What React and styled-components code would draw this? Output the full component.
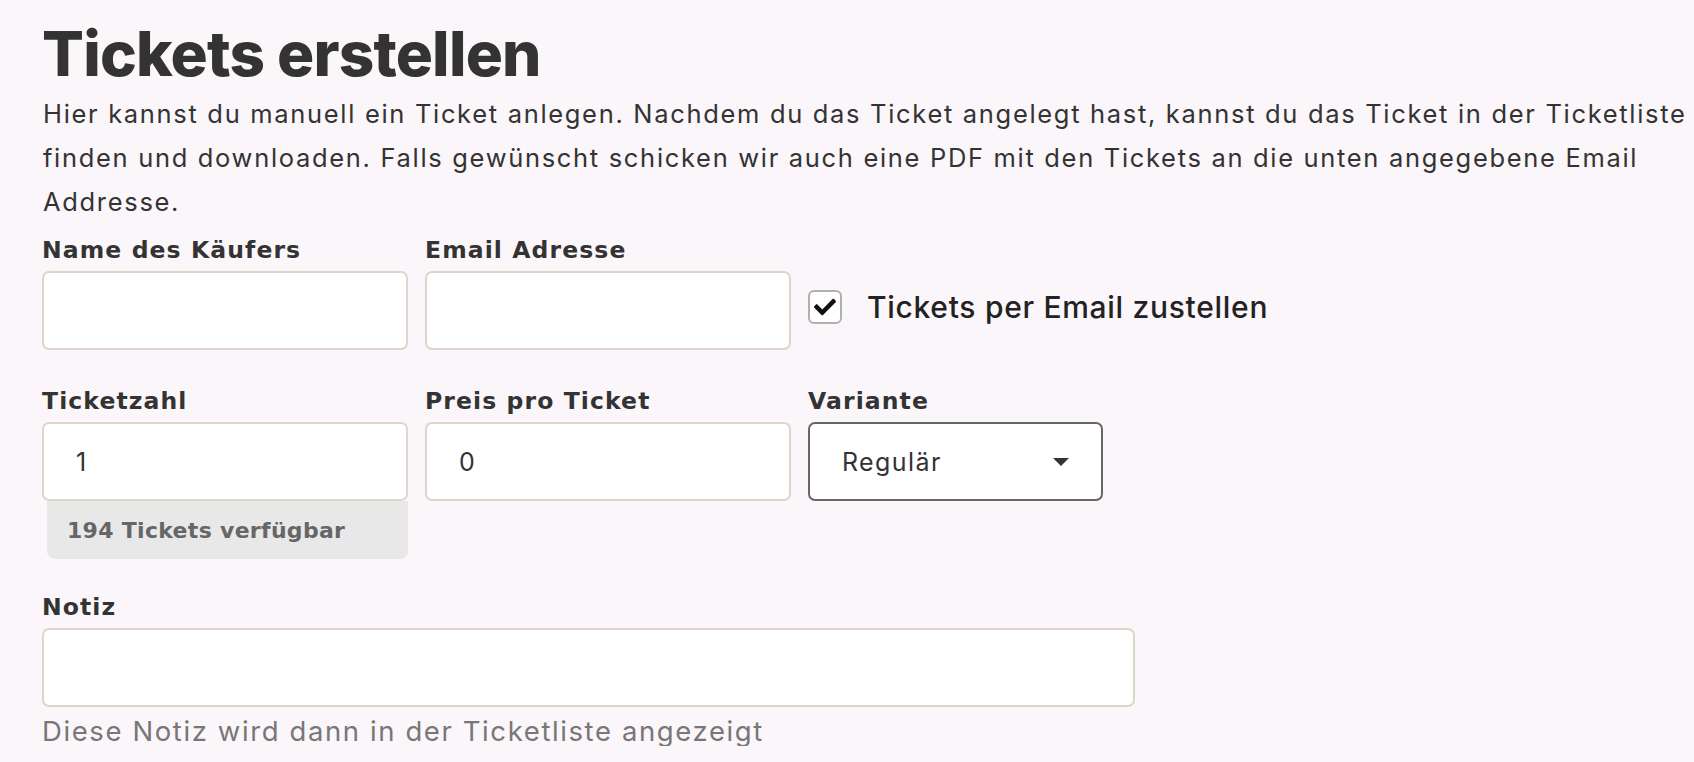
import React from "react";
import styled, { createGlobalStyle } from "styled-components";
import { FaCheck } from "react-icons/fa";

const Global = createGlobalStyle`
  html, body { margin: 0; padding: 0; background: #faf6fa; }
  body { font-family: Inter, "Noto Sans", sans-serif; color: #333; }
  * { box-sizing: border-box; }
`;

const Page = styled.main`
  padding: 23px 0 0 42px;
  width: 1694px;
`;

const Title = styled.h1`
  margin: 0;
  font-family: Inter, sans-serif;
  font-weight: 800;
  font-size: 62px;
  line-height: 62px;
  letter-spacing: -0.8px;
  color: #333;
`;

const Intro = styled.p`
  margin: 7px 0 0 1px;
  font-size: 25.5px;
  line-height: 44px;
  letter-spacing: 1.68px;
  color: #333;
  width: 1650px;
`;

const Row = styled.div`
  display: flex;
  gap: 17px;
  align-items: flex-start;
  margin-top: ${(p) => p.$top || 0}px;
`;

const Field = styled.div`
  display: flex;
  flex-direction: column;
  width: ${(p) => p.$w}px;
`;

const Label = styled.label`
  display: block;
  font-family: "DejaVu Sans", Inter, sans-serif;
  font-weight: 700;
  font-size: 23.5px;
  line-height: 30px;
  letter-spacing: 1.1px;
  color: #333;
  margin-bottom: 6px;
`;

const Input = styled.input`
  width: 100%;
  height: 79px;
  border: 2px solid #ddd6ca;
  border-radius: 7px;
  background: #fff;
  padding: 0 32px;
  font-family: Inter, sans-serif;
  font-size: 25px;
  letter-spacing: 1.2px;
  color: #333;
  outline: none;
`;

const SelectBox = styled.div`
  height: 79px;
  border: 2px solid #666;
  border-radius: 7px;
  background: #fff;
  display: flex;
  align-items: center;
  padding: 0 32px;
  font-size: 25px;
  letter-spacing: 1.4px;
  color: #333;
`;

const Caret = styled.span`
  margin-left: auto;
  width: 0;
  height: 0;
  border-left: 8px solid transparent;
  border-right: 8px solid transparent;
  border-top: 8px solid #333;
`;

const CheckGroup = styled.label`
  display: flex;
  align-items: center;
  height: 79px;
  padding-bottom: 8px;
  align-self: flex-end;
  gap: 25px;
  cursor: pointer;
`;

const CheckBox = styled.span`
  width: 34px;
  height: 34px;
  border: 2px solid #b0b0b0;
  border-radius: 6px;
  background: #fff;
  display: flex;
  align-items: center;
  justify-content: center;
  color: #111;
  font-size: 22px;
`;

const CheckText = styled.span`
  font-size: 30px;
  font-weight: 500;
  letter-spacing: 0.7px;
  color: #222;
`;

const Available = styled.div`
  margin-left: 5px;
  height: 58px;
  background: #e8e8e8;
  border-radius: 0 0 8px 8px;
  display: flex;
  align-items: center;
  padding-left: 20px;
  font-family: "DejaVu Sans", Inter, sans-serif;
  font-weight: 700;
  font-size: 22px;
  letter-spacing: 0.3px;
  color: #666;
`;

const Helper = styled.div`
  margin-top: 9px;
  font-size: 27.5px;
  line-height: 30px;
  letter-spacing: 1.6px;
  color: #777;
`;

export default function App() {
  return (
    <>
      <Global />
      <Page>
        <Title>Tickets erstellen</Title>
        <Intro>
          Hier kannst du manuell ein Ticket anlegen. Nachdem du das Ticket angelegt hast, kannst du das Ticket in der
          Ticketliste finden und downloaden. Falls gewünscht schicken wir auch eine PDF mit den Tickets an die unten
          angegebene Email Addresse.
        </Intro>
        <Row $top={11}>
          <Field $w={366}>
            <Label>Name des Käufers</Label>
            <Input type="text" />
          </Field>
          <Field $w={366}>
            <Label>Email Adresse</Label>
            <Input type="email" />
          </Field>
          <CheckGroup>
            <CheckBox>
              <FaCheck />
            </CheckBox>
            <CheckText>Tickets per Email zustellen</CheckText>
          </CheckGroup>
        </Row>
        <Row $top={36}>
          <Field $w={366}>
            <Label>Ticketzahl</Label>
            <Input type="text" defaultValue="1" />
            <Available>194 Tickets verfügbar</Available>
          </Field>
          <Field $w={366}>
            <Label>Preis pro Ticket</Label>
            <Input type="text" defaultValue="0" />
          </Field>
          <Field $w={295}>
            <Label>Variante</Label>
            <SelectBox>
              Regulär
              <Caret />
            </SelectBox>
          </Field>
        </Row>
        <Row $top={33}>
          <Field $w={1093}>
            <Label>Notiz</Label>
            <Input type="text" />
            <Helper>Diese Notiz wird dann in der Ticketliste angezeigt</Helper>
          </Field>
        </Row>
      </Page>
    </>
  );
}
